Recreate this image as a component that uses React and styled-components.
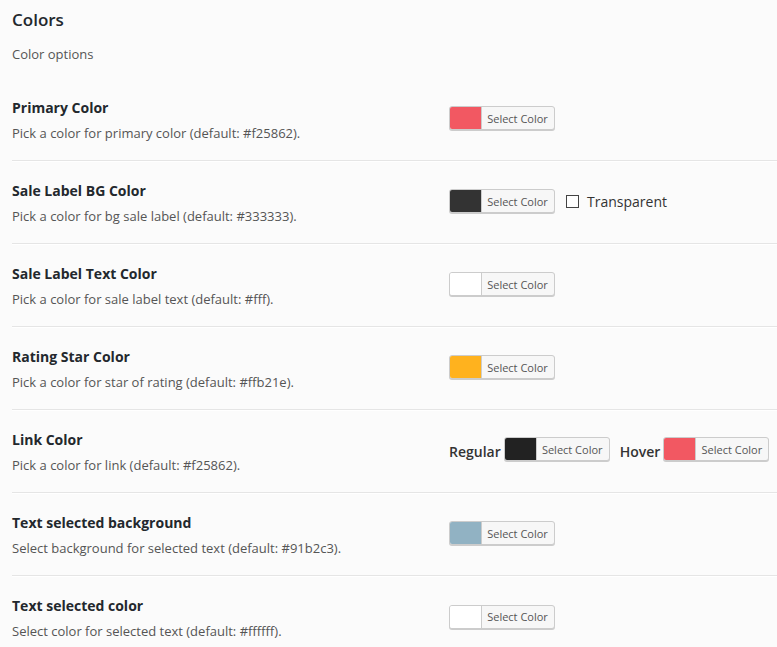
import React from "react";
import styled, { createGlobalStyle } from "styled-components";

const Global = createGlobalStyle`
  html, body {
    margin: 0;
    padding: 0;
    background: #fbfbfb;
  }
  body {
    font-family: "Open Sans", "Noto Sans", sans-serif;
    color: #333;
  }
`;

const Page = styled.div`
  padding: 0 0 0 12px;
  width: 765px;
  overflow: hidden;
`;

const Title = styled.h2`
  margin: 0;
  padding-top: 8px;
  font-size: 17px;
  font-weight: 600;
  line-height: 24px;
  color: #23282d;
`;

const Intro = styled.p`
  margin: 12px 0 0;
  font-size: 13px;
  line-height: 20px;
  color: #555;
`;

const Table = styled.div`
  margin-top: 14px;
`;

const Row = styled.div`
  display: grid;
  grid-template-columns: 437px 1fr;
  align-items: center;
  height: 83px;
  box-sizing: border-box;
  padding: 20px 0 17px;
  border-bottom: ${(p) => (p.last ? "none" : "1px solid #e5e5e5")};
  box-shadow: ${(p) => (p.last ? "none" : "0 1px 0 #fff")};
`;

const Label = styled.div`
  align-self: start;
`;

const RowTitle = styled.div`
  font-size: 14px;
  font-weight: 700;
  line-height: 20px;
  color: #23282d;
`;

const Desc = styled.div`
  margin-top: 5px;
  font-size: 13px;
  line-height: 20px;
  color: #555;
`;

const Controls = styled.div`
  display: flex;
  align-items: center;
  gap: ${(p) => p.gap || 10}px;
  margin-top: ${(p) => p.shift || 0}px;
`;

const ColorButton = styled.button`
  display: flex;
  align-items: stretch;
  height: 24px;
  width: 106px;
  padding: 0;
  border: 1px solid #ccc;
  border-radius: 3px;
  background: #f7f7f7;
  box-shadow: 0 1px 0 #ccc;
  overflow: hidden;
  cursor: pointer;
  font-family: "Open Sans", "Noto Sans", sans-serif;
`;

const Swatch = styled.span`
  width: 31px;
  flex: none;
  background: ${(p) => p.color};
  border-right: 1px solid #ccc;
`;

const BtnText = styled.span`
  flex: 1;
  display: flex;
  align-items: center;
  justify-content: center;
  padding-right: 1px;
  font-size: 11px;
  color: #555;
`;

const Check = styled.label`
  display: flex;
  align-items: center;
  gap: 8px;
  margin-left: 1px;
  font-size: 14px;
  color: #333;
`;

const Box = styled.span`
  width: 11px;
  height: 11px;
  border: 1px solid #444;
  background: #fff;
`;

const SubLabel = styled.span`
  font-size: 14px;
  font-weight: 600;
  color: #333;
  margin-top: 5px;
  margin-right: -8px;
  margin-left: ${(p) => p.ml || 0}px;
`;

const Picker = ({ color }) => (
  <ColorButton>
    <Swatch color={color} />
    <BtnText>Select Color</BtnText>
  </ColorButton>
);

const rows = [
  { title: "Primary Color", desc: "Pick a color for primary color (default: #f25862).", color: "#f25862" },
  { title: "Sale Label BG Color", desc: "Pick a color for bg sale label (default: #333333).", color: "#333333", transparent: true },
  { title: "Sale Label Text Color", desc: "Pick a color for sale label text (default: #fff).", color: "#ffffff" },
  { title: "Rating Star Color", desc: "Pick a color for star of rating (default: #ffb21e).", color: "#ffb21e" },
  { title: "Link Color", desc: "Pick a color for link (default: #f25862).", link: true },
  { title: "Text selected background", desc: "Select background for selected text (default: #91b2c3).", color: "#91b2c3" },
  { title: "Text selected color", desc: "Select color for selected text (default: #ffffff).", color: "#ffffff" },
];

export default function App() {
  return (
    <Page>
      <Global />
      <Title>Colors</Title>
      <Intro>Color options</Intro>
      <Table>
        {rows.map((r, i) => (
          <Row key={r.title} last={i === rows.length - 1}>
            <Label>
              <RowTitle>{r.title}</RowTitle>
              <Desc>{r.desc}</Desc>
            </Label>
            {r.link ? (
              <Controls gap={11} shift={-7}>
                <SubLabel>Regular</SubLabel>
                <Picker color="#222222" />
                <SubLabel ml={-1}>Hover</SubLabel>
                <Picker color="#f25862" />
              </Controls>
            ) : (
              <Controls shift={-5}>
                <Picker color={r.color} />
                {r.transparent && (
                  <Check>
                    <Box />
                    Transparent
                  </Check>
                )}
              </Controls>
            )}
          </Row>
        ))}
      </Table>
    </Page>
  );
}
